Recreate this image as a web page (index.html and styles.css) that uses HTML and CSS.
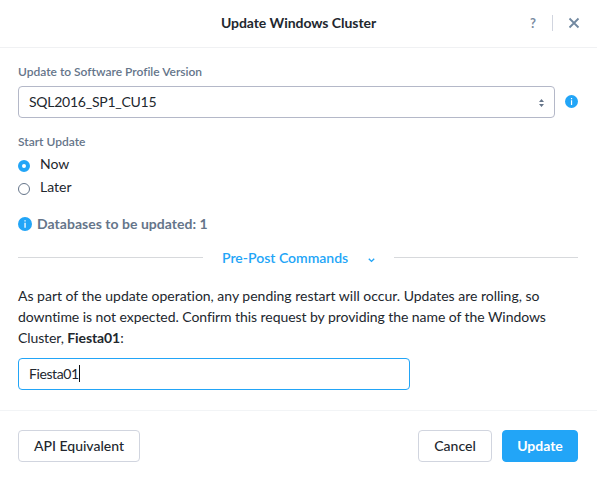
FILE: index.html
```html
<!DOCTYPE html>
<html lang="en">
<head>
<meta charset="utf-8">
<title>Update Windows Cluster</title>
<link rel="stylesheet" href="styles.css">
</head>
<body>
<div class="dialog">
  <header class="header">
    <h1 class="title">Update Windows Cluster</h1>
    <div class="tools">
      <span class="help">?</span>
      <span class="rule"></span>
      <svg class="close" width="12" height="12" viewBox="0 0 12 12"><path d="M1.5 1.5l9 9M10.5 1.5l-9 9"/></svg>
    </div>
  </header>
  <main class="body">
    <div class="label">Update to Software Profile Version</div>
    <div class="select-row">
      <div class="select">
        <span class="t-sql">SQL2016_SP1_CU15</span>
        <svg class="sort" width="5" height="8" viewBox="0 0 5 8"><path d="M2.5 0L5 3H0zM2.5 8L0 5h5z"/></svg>
      </div>
      <svg class="info" width="13" height="13" viewBox="0 0 14 14"><circle cx="7" cy="7" r="7"/><path d="M6.4 3.2h1.3v1.4H6.4zM6.4 5.7h1.3v5H6.4z"/></svg>
    </div>
    <div class="label start">Start Update</div>
    <div class="option"><span class="radio checked"></span><span>Now</span></div>
    <div class="option"><span class="radio"></span><span>Later</span></div>
    <div class="count">
      <svg class="info" width="14" height="14" viewBox="0 0 14 14"><circle cx="7" cy="7" r="7"/><path d="M6.4 3.2h1.3v1.4H6.4zM6.4 5.7h1.3v5H6.4z"/></svg>
      <span class="t-count">Databases to be updated: 1</span>
    </div>
    <div class="divider">
      <span class="toggle"><span class="t-toggle">Pre-Post Commands</span>
      <svg class="chevron" width="7" height="5" viewBox="0 0 7 5"><path d="M.8.8l2.7 2.6L6.2.8"/></svg></span>
    </div>
    <p class="message"><span class="t-line1">As part of the update operation, any pending restart will occur. Updates are rolling, so</span><br><span class="t-line2">downtime is not expected. Confirm this request by providing the name of the Windows</span><br><span class="t-line3">Cluster, <b>Fiesta01</b>:</span></p>
    <div class="input"><span class="t-input">Fiesta01</span><span class="caret"></span></div>
  </main>
  <footer class="footer">
    <div class="button api">API Equivalent</div>
    <div class="button cancel">Cancel</div>
    <div class="button primary">Update</div>
  </footer>
</div>
</body>
</html>
```
FILE: styles.css
```css
* { box-sizing: border-box; }
body { margin: 0; background: #fff; color: #22272e; font: 14px/21px Lato, "Open Sans", sans-serif; font-variant-ligatures: none; }
.dialog { width: 597px; height: 480px; display: flex; flex-direction: column; }
.dialog span { white-space: nowrap; }
.header { height: 48px; border-bottom: 1px solid #f0f1f3; padding-bottom: 1px; display: grid; grid-template-columns: 1fr auto 1fr; align-items: center; }
.title { grid-column: 2; margin: 0; font-size: 14px; line-height: 20px; font-weight: 700; letter-spacing: -.05px; }
.tools { display: flex; align-items: center; justify-content: flex-end; padding-right: 17px; }
.help { font: 700 13px/16px Lato, sans-serif; color: #7b8ba2; margin-right: 16px; }
.rule { width: 1px; height: 16px; background: #d1d5df; margin-right: 15px; }
.close { fill: none; stroke: #7188a0; stroke-width: 1.8; }
.body { flex: none; height: 363px; padding: 15px 19px 0 18px; border-bottom: 1px solid #f2f4f6; }
.label { font-size: 12px; line-height: 18px; font-weight: 600; color: #65758a; }
.select-row { display: flex; align-items: center; gap: 10px; margin-top: 5px; }
.select { width: 537px; height: 32px; border: 1px solid #b4b8c8; border-radius: 4px; padding: 0 10px 2px; display: flex; align-items: center; justify-content: space-between; }
.sort { fill: #65758a; margin-top: 4px; }
.info { fill: #22a5f7; flex: none; }
.info path { fill: #fff; }
.select-row .info { margin-bottom: 1px; }
.t-sql { letter-spacing: -.25px; }
.start { margin-top: 15px; margin-bottom: 1px; }
.option { display: flex; align-items: center; gap: 10px; height: 23px; }
.radio { width: 12px; height: 12px; border: 1px solid #65758a; border-radius: 50%; margin-top: 4px; }
.radio.checked { border: 4px solid #22a5f7; }
.count { display: flex; align-items: center; gap: 5px; height: 20px; margin-top: 16px; color: #65758a; font-weight: 700; }
.t-count { margin-bottom: 2px; letter-spacing: .03px; }
.divider { display: flex; align-items: center; height: 20px; margin-top: 14px; color: #22a5f7; font-weight: 600; }
.divider::before, .divider::after { content: ""; flex: none; width: 185px; height: 1px; background: #d7d9dc; margin-top: -1px; }
.divider::after { width: 184px; }
.toggle { flex: 1; display: flex; align-items: center; justify-content: space-between; padding: 0 19px; }
.t-toggle { margin-bottom: 2px; }
.chevron { fill: none; stroke: #22a5f7; stroke-width: 1.4; margin-top: 4px; }
.message { margin: 17px 0 10px; }
.t-line1 { letter-spacing: -.01px; }
.t-line2 { letter-spacing: -.06px; }
.t-line3 { letter-spacing: -.1px; }
.input { width: 392px; height: 32px; border: 1px solid #22a5f7; border-radius: 4px; padding: 0 10px 2px; display: flex; align-items: center; }
.t-input { letter-spacing: -.4px; }
.caret { width: 1px; height: 17px; background: #111; }
.footer { display: flex; align-items: flex-start; padding: 19px 19px 0 18px; gap: 10px; }
.button { height: 32px; border: 1px solid #d1d5df; border-radius: 4px; padding-bottom: 2px; display: flex; align-items: center; justify-content: center; font-weight: 500; }
.api { width: 122px; margin-right: auto; }
.cancel { width: 74px; }
.primary { width: 76px; background: #22a5f7; border-color: #22a5f7; color: #fff; font-weight: 700; }
```
